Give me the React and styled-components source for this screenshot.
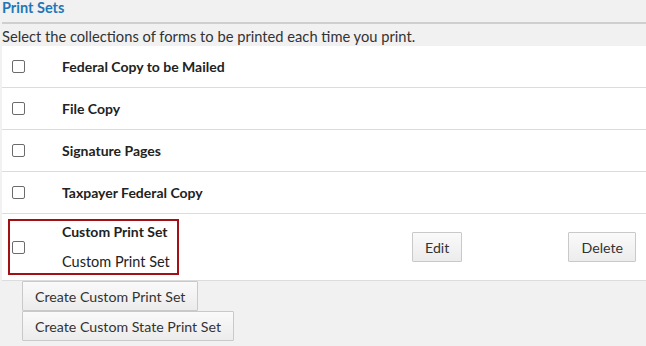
import React from 'react';
import styled, { createGlobalStyle } from 'styled-components';

const GlobalStyle = createGlobalStyle`
  body {
    margin: 0;
    background: #f1f1f1;
    font-family: Lato, "Open Sans", sans-serif;
    color: #333;
  }
`;

const Page = styled.div`
  width: 646px;
  height: 346px;
  overflow: hidden;
`;

const Title = styled.h2`
  margin: 0;
  padding: 0 0 0 2px;
  height: 22px;
  line-height: 15px;
  font-size: 14.5px;
  font-weight: 700;
  color: #1f77b8;
`;

const Rule = styled.div`
  margin-left: 2px;
  height: 2px;
  background: #cfcfcf;
`;

const Hint = styled.p`
  margin: 0;
  padding: 2px 0 0 2px;
  height: 20px;
  line-height: 20px;
  font-size: 14.7px;
  color: #333;
`;

const Panel = styled.div`
  margin-left: 2px;
  background: #fff;
`;

const Row = styled.div`
  display: grid;
  grid-template-columns: 410px 1fr auto;
  align-items: center;
  height: ${p => (p.$tall ? '66px' : '41px')};
  border-bottom: 1px solid #dcdcdc;
  padding-right: 10px;
`;

const Item = styled.label`
  display: flex;
  align-items: center;
  padding-left: 10px;
  font-size: 14px;
  font-weight: 700;
  color: #222;
`;

const Box = styled.input.attrs({ type: 'checkbox' })`
  appearance: none;
  margin: 0 37px 0 0;
  width: 13px;
  height: 13px;
  border: 1px solid #6b6b6b;
  border-radius: 2px;
  background: #fff;
`;

const Highlight = styled.label`
  display: flex;
  align-items: center;
  margin-left: 6px;
  width: 165px;
  height: 52px;
  border: 2px solid #a30f14;
  padding-left: 2px;
  box-sizing: content-box;
`;

const Stack = styled.div`
  display: flex;
  flex-direction: column;
  gap: 12px;
  line-height: 18px;
  color: #222;
`;

const Name = styled.span`
  font-size: ${p => (p.$bold ? '14px' : '14.5px')};
  font-weight: ${p => (p.$bold ? 700 : 400)};
`;

const Button = styled.button`
  height: 30px;
  padding: 0 12px;
  font-family: Lato, "Open Sans", sans-serif;
  font-size: 14.2px;
  color: #333;
  background: linear-gradient(#fafafa, #ececec);
  border: 1px solid #c9c9c9;
  border-radius: 1px;
  justify-self: start;
`;

const Actions = styled.div`
  display: flex;
  flex-direction: column;
  align-items: flex-start;
  padding-left: 22px;
`;

const sets = ['Federal Copy to be Mailed', 'File Copy', 'Signature Pages', 'Taxpayer Federal Copy'];

export default function App() {
  return (
    <Page>
      <GlobalStyle />
      <Title>Print Sets</Title>
      <Rule />
      <Hint>Select the collections of forms to be printed each time you print.</Hint>
      <Panel>
        {sets.map(s => (
          <Row key={s}>
            <Item><Box />{s}</Item>
          </Row>
        ))}
        <Row $tall>
          <Highlight>
            <Box />
            <Stack>
              <Name $bold>Custom Print Set</Name>
              <Name>Custom Print Set</Name>
            </Stack>
          </Highlight>
          <Button>Edit</Button>
          <Button>Delete</Button>
        </Row>
      </Panel>
      <Actions>
        <Button>Create Custom Print Set</Button>
        <Button>Create Custom State Print Set</Button>
      </Actions>
    </Page>
  );
}
